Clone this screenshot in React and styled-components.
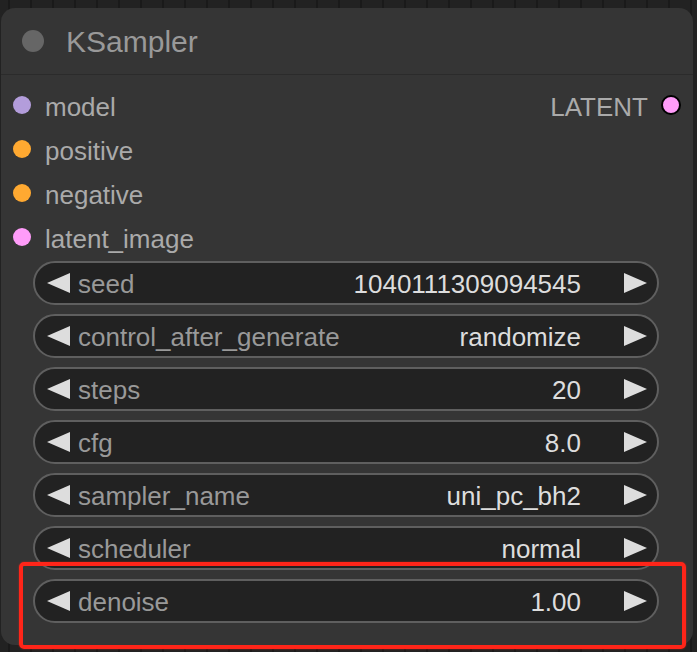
import React from "react";
import styled, { createGlobalStyle } from "styled-components";

const Global = createGlobalStyle`
  html, body { margin: 0; padding: 0; }
  body {
    width: 697px;
    height: 652px;
    overflow: hidden;
    font-family: "Liberation Sans", Arial, sans-serif;
    background-color: #222;
    background-image: repeating-linear-gradient(
      90deg,
      #1a1a1a 0px,
      #1a1a1a 2px,
      transparent 2px,
      transparent 22px
    );
    background-position: 8px 0;
  }
`;

const Canvas = styled.div`
  padding: 8px 4px 0 1px;
`;

const Node = styled.div`
  position: relative;
  width: 692px;
  height: 637px;
  box-sizing: border-box;
  background: #353535;
  border-radius: 14px;
  display: flex;
  flex-direction: column;
`;

const Title = styled.div`
  height: 67px;
  display: flex;
  align-items: center;
  gap: 22px;
  padding-left: 21px;
  border-bottom: 1px solid #2b2b2b;
  box-sizing: border-box;
`;

const TitleDot = styled.span`
  width: 22px;
  height: 22px;
  border-radius: 50%;
  background: #666;
`;

const TitleText = styled.span`
  font-size: 30px;
  color: #999;
  line-height: 1;
  margin-top: 1px;
`;

const Slots = styled.div`
  padding-top: 8px;
  display: flex;
  flex-direction: column;
`;

const SlotRow = styled.div`
  height: 44px;
  display: flex;
  align-items: center;
  justify-content: space-between;
  padding: 0 12px;
`;

const Slot = styled.div`
  display: flex;
  align-items: center;
  gap: ${(p) => (p.$out ? "13px" : "14px")};
  flex-direction: ${(p) => (p.$out ? "row-reverse" : "row")};
`;

const Dot = styled.span`
  width: ${(p) => (p.$out ? "16px" : "18px")};
  height: ${(p) => (p.$out ? "16px" : "18px")};
  border-radius: 50%;
  background: ${(p) => p.$color};
  border: ${(p) => (p.$out ? "2px solid #000" : "none")};
  flex: none;
`;

const SlotLabel = styled.span`
  font-size: 26px;
  color: #aaa;
  line-height: 1;
  padding-top: 3px;
`;

const Widgets = styled.div`
  margin-top: 2px;
  padding: 0 34px 0 32px;
  display: flex;
  flex-direction: column;
  gap: 9px;
`;

const Widget = styled.div`
  height: 44px;
  box-sizing: border-box;
  border: 2px solid #5f5f5f;
  border-radius: 22px;
  background: #222;
  display: flex;
  align-items: center;
  padding: 0 10px 0 12px;
`;

const Arrow = styled.span`
  width: 0;
  height: 0;
  border-top: 10px solid transparent;
  border-bottom: 10px solid transparent;
  ${(p) =>
    p.$right
      ? "border-left: 23px solid #ddd;"
      : "border-right: 23px solid #ddd;"}
  flex: none;
`;

const WLabel = styled.span`
  margin-left: 8px;
  padding-top: 2px;
  font-size: 26px;
  color: #999;
  line-height: 1;
  flex: 1;
`;

const WValue = styled.span`
  margin-right: 43px;
  padding-top: 2px;
  font-size: 26px;
  color: #ddd;
  line-height: 1;
`;

const Highlight = styled.div`
  position: absolute;
  left: 18px;
  top: 554px;
  width: 667px;
  height: 87px;
  box-sizing: border-box;
  border: 4px solid #ff2519;
  border-radius: 5px;
  box-shadow: 0 0 2px rgba(255, 40, 25, 0.6);
  pointer-events: none;
`;

const inputs = [
  { name: "model", color: "#b39ddb" },
  { name: "positive", color: "#ffa931" },
  { name: "negative", color: "#ffa931" },
  { name: "latent_image", color: "#ff9cf9" },
];

const widgets = [
  ["seed", "1040111309094545"],
  ["control_after_generate", "randomize"],
  ["steps", "20"],
  ["cfg", "8.0"],
  ["sampler_name", "uni_pc_bh2"],
  ["scheduler", "normal"],
  ["denoise", "1.00"],
];

export default function App() {
  return (
    <>
      <Global />
      <Canvas>
        <Node>
          <Title>
            <TitleDot />
            <TitleText>KSampler</TitleText>
          </Title>
          <Slots>
            {inputs.map((inp, i) => (
              <SlotRow key={inp.name}>
                <Slot>
                  <Dot $color={inp.color} />
                  <SlotLabel>{inp.name}</SlotLabel>
                </Slot>
                {i === 0 && (
                  <Slot $out>
                    <Dot $out $color="#ff9cf9" />
                    <SlotLabel>LATENT</SlotLabel>
                  </Slot>
                )}
              </SlotRow>
            ))}
          </Slots>
          <Widgets>
            {widgets.map(([k, v]) => (
              <Widget key={k}>
                <Arrow />
                <WLabel>{k}</WLabel>
                <WValue>{v}</WValue>
                <Arrow $right />
              </Widget>
            ))}
          </Widgets>
          <Highlight />
        </Node>
      </Canvas>
    </>
  );
}
